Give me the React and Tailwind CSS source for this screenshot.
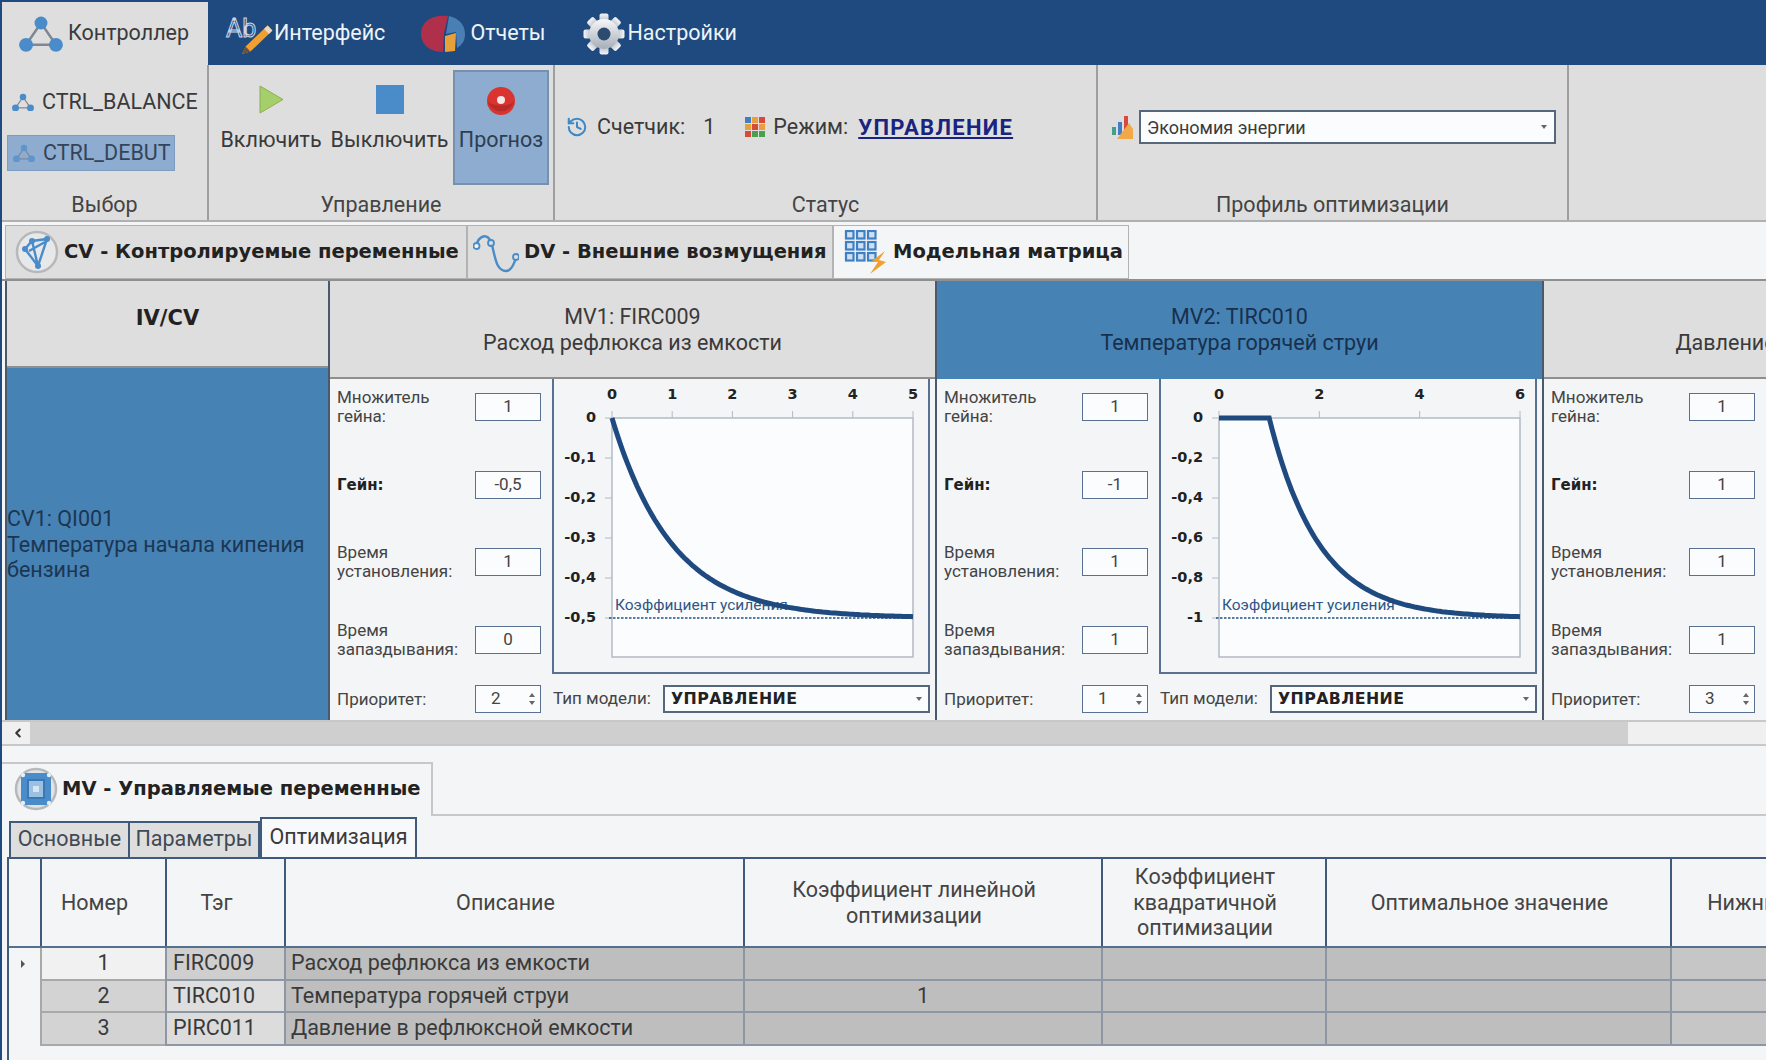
import React from 'react'
import { History, ChevronLeft } from 'lucide-react'

const boldFont = "font-['DejaVu_Sans',sans-serif] font-bold"

const ControllerIcon = ({ size = 44, color = '#4a8bc9' }) => (
  <svg width={size} height={size * 0.86} viewBox="0 0 44 38">
    <path d="M22 8 L7 30 L37 30 Z" fill="none" stroke="#7d8894" strokeWidth="2.5" />
    <circle cx="22" cy="8" r="6.5" fill={color} />
    <circle cx="7" cy="30" r="7" fill={color} />
    <circle cx="37" cy="30" r="7" fill={color} />
  </svg>
)

const AbIcon = () => (
  <svg width="48" height="42" viewBox="0 0 48 42">
    <text x="1" y="24" fontFamily="Roboto, sans-serif" fontSize="25" fill="#24528a" stroke="#c9d6e8" strokeWidth="1">Ab</text>
    <path d="M42.6 12.4 L47.4 17.6 L25.4 38.6 L17 41 L20.6 33.4 Z" fill="#f0a030" />
    <path d="M42.6 12.4 L47.4 17.6 L44 21 L39 16 Z" fill="#e8d8c4" />
    <path d="M20.6 33.4 L25.4 38.6 L17 41 Z" fill="#6a5040" />
  </svg>
)

const PieIcon = () => (
  <svg width="44" height="38" viewBox="0 0 44 38">
    <path d="M27 1 C12 -1 0 6 0 19 C0 30 10 37 22 37 L23 18 Z" fill="#b02f4a" />
    <path d="M28 1 C37 3 44 9 44 19 C44 26 41 30 36 33 L35 17 L25 19 Z" fill="#4a7fb5" />
    <path d="M24 21 L35 18 L34 36 L24 37 Z" fill="#e8a03a" />
  </svg>
)

const GearIcon = () => (
  <svg width="42" height="42" viewBox="0 0 42 42">
    <defs>
      <linearGradient id="gear" x1="0" y1="0" x2="0" y2="1">
        <stop offset="0" stopColor="#f6f7f9" />
        <stop offset="1" stopColor="#a6aeb8" />
      </linearGradient>
    </defs>
    {[0, 45, 90, 135, 180, 225, 270, 315].map((a) => (
      <rect key={a} x="16.5" y="0.5" width="9" height="10" rx="2" fill="url(#gear)" transform={`rotate(${a} 21 21)`} />
    ))}
    <circle cx="21" cy="21" r="15" fill="url(#gear)" />
    <circle cx="21" cy="21" r="6.5" fill="#2d4a70" />
  </svg>
)

const PlayIcon = () => (
  <svg width="25" height="29" viewBox="0 0 25 29">
    <path d="M1 1 L24 14.5 L1 28 Z" fill="#a4cf6a" stroke="#8cb050" strokeWidth="1" />
  </svg>
)

const RecordIcon = () => (
  <svg width="30" height="30" viewBox="0 0 30 30">
    <circle cx="15" cy="15" r="14" fill="#d9342f" />
    <path d="M1.5 15 A14 14 0 0 0 28.5 15 A14 6 0 0 1 1.5 15" fill="#b92a2a" />
    <circle cx="15" cy="14" r="4" fill="#f7e6e6" />
  </svg>
)

const ColorGrid = () => {
  const colors = ['#3f7fc4', '#e8a03a', '#d94a3d', '#e8a03a', '#d94a3d', '#e8a03a', '#d94a3d', '#4aa04f', '#4aa04f']
  return (
    <svg width="20" height="20" viewBox="0 0 20 20">
      {colors.map((c, i) => (
        <rect key={i} x={(i % 3) * 7} y={Math.floor(i / 3) * 7} width="6" height="6" fill={c} />
      ))}
    </svg>
  )
}

const ProfileIcon = () => (
  <svg width="23" height="24" viewBox="0 0 23 24">
    <rect x="1" y="12" width="4" height="8" fill="#4a9d8a" />
    <rect x="7" y="7" width="4" height="13" fill="#3f7fc4" />
    <rect x="13" y="1" width="4" height="14" fill="#d94a3d" />
    <path d="M22 24 L6 24 L18 8 L22 14 Z" fill="#f0a848" />
  </svg>
)

const CvIcon = () => (
  <svg width="44" height="44" viewBox="0 0 44 44">
    <circle cx="22" cy="22" r="20" fill="#e6e8ea" stroke="#b8b8b8" strokeWidth="2.5" />
    <path d="M10 19 L17 11 L32 9 L23 36 Z M17 11 L23 36 M14 21 L30 12" fill="none" stroke="#4a8bc9" strokeWidth="2.4" />
    <circle cx="10" cy="19" r="3" fill="#4a8bc9" />
    <circle cx="17" cy="11" r="3" fill="#4a8bc9" />
    <circle cx="32" cy="9" r="3" fill="#4a8bc9" />
    <circle cx="23" cy="36" r="3" fill="#4a8bc9" />
  </svg>
)

const DvIcon = () => (
  <svg width="46" height="46" viewBox="0 0 46 46">
    <path d="M3 17 C6 6 14 4 18 13 C22 24 22 42 33 42 C40 42 41 32 43 30" fill="none" stroke="#4a8bc9" strokeWidth="2.4" />
    <circle cx="3.5" cy="17" r="3" fill="#f3f5f7" stroke="#4a8bc9" strokeWidth="1.8" />
    <circle cx="18" cy="14" r="3" fill="#dedede" stroke="#4a8bc9" strokeWidth="1.8" />
    <circle cx="43" cy="28" r="3" fill="#dedede" stroke="#4a8bc9" strokeWidth="1.8" />
  </svg>
)

const MatrixIcon = () => (
  <svg width="44" height="44" viewBox="0 0 44 44">
    {[0, 1, 2].flatMap((r) =>
      [0, 1, 2].map((c) => (
        <rect key={`${r}${c}`} x={c * 11 + 2} y={r * 11 + 1} width="7.5" height="7.5" fill="#cfe0f2" stroke="#3f7fc4" strokeWidth="2.2" />
      ))
    )}
    <path d="M41 21 L28 31 L34 32 L26 44 L42 32 L35 30 Z" fill="#f0a030" />
  </svg>
)

const MvIcon = () => (
  <svg width="44" height="44" viewBox="0 0 44 44">
    <circle cx="22" cy="22" r="20" fill="#dfe4ea" stroke="#b8b8b8" strokeWidth="2.5" />
    <rect x="7" y="6" width="30" height="32" rx="2" fill="#4a8bc9" />
    <rect x="14" y="13" width="16" height="18" fill="#9cc0e2" stroke="#3a78b5" strokeWidth="2" />
    <rect x="19" y="19" width="6" height="6" fill="#d9e6f2" />
    {[[9, 8], [35, 8], [9, 36], [35, 36]].map(([x, y]) => (
      <circle key={`${x}${y}`} cx={x} cy={y} r="2.2" fill="#e6eef6" />
    ))}
  </svg>
)

const Chart = ({ xmax, delay, xticks, yticks }) => {
  const left = 58
  const right = 359
  const top = 39
  const gainY = 239
  const sx = (t) => left + (t / xmax) * (right - left)
  const points = []
  for (let i = 0; i <= 120; i++) {
    const t = (i / 120) * xmax
    const v = t < delay ? 0 : 1 - Math.exp(-(t - delay))
    points.push(`${sx(t).toFixed(1)},${(top + v * (gainY - top)).toFixed(1)}`)
  }
  return (
    <svg width="375" height="293" viewBox="0 0 375 293" className="block">
      <rect x={left} y={top} width={right - left} height="239" fill="#fbfcfd" stroke="#b3bac3" strokeWidth="1.5" />
      {xticks.map((t) => (
        <g key={t}>
          <line x1={sx(t)} x2={sx(t)} y1={top - 7} y2={top} stroke="#b3bac3" />
          <text x={sx(t)} y="20" textAnchor="middle" fontFamily="DejaVu Sans, sans-serif" fontWeight="700" fontSize="14.5" fill="#222">{t}</text>
        </g>
      ))}
      {yticks.map((l, i) => {
        const y = top + i * 40
        return (
          <g key={l}>
            <line x1={left - 7} x2={left} y1={y} y2={y} stroke="#b3bac3" />
            <text x="42" y={y + 4} textAnchor="end" fontFamily="DejaVu Sans, sans-serif" fontWeight="700" fontSize="14.5" fill="#222">{l}</text>
          </g>
        )
      })}
      <line x1={left - 3} x2={right} y1={gainY} y2={gainY} stroke="#24507f" strokeWidth="1.5" strokeDasharray="2.5 1.5" />
      <text x={left + 3} y="231" fontFamily="Roboto, sans-serif" fontSize="15.5" fill="#2f5685">Коэффициент усиления</text>
      <polyline points={points.join(' ')} fill="none" stroke="#1f4a7f" strokeWidth="5" />
    </svg>
  )
}

const Field = ({ label, value, bold, spin }) => (
  <div className="flex h-[28px] items-center">
    <div className={`w-[138px] shrink-0 leading-[19px] ${bold ? "pt-[1px] font-['DejaVu_Sans',sans-serif] text-[15px] font-bold text-[#222]" : 'text-[17px] text-[#444]'}`}>{label}</div>
    {spin ? (
      <div className="flex h-[28px] w-[66px] items-center justify-between border border-[#5a7090] bg-[#fbfcfd] pl-[15px] pr-[5px] text-[17px] text-[#444]">
        <span>{value}</span>
        <span className="flex flex-col gap-[4px] text-[#555]">
          <span className="h-0 w-0 border-x-[3px] border-b-[4px] border-x-transparent border-b-[#666]" />
          <span className="h-0 w-0 border-x-[3px] border-t-[4px] border-x-transparent border-t-[#666]" />
        </span>
      </div>
    ) : (
      <div className="flex h-[28px] w-[66px] items-center justify-center border border-[#5a7090] bg-[#fbfcfd] text-[17px] text-[#444]">{value}</div>
    )}
  </div>
)

const MvColumn = ({ title, desc, active, vals, chart }) => (
  <div className="flex w-[607px] shrink-0 flex-col border-r-2 border-[#4b5a6a]">
    <div className={`flex h-[98px] flex-col items-center justify-center border-b-2 pt-[2px] text-[21.5px] leading-[26px] ${active ? 'border-[#4682b4] bg-[#4682b4] text-[#17304d]' : 'border-[#8f8f8f] bg-[#dedede] text-[#3a3a3a]'}`}>
      <div>{title}</div>
      <div>{desc}</div>
    </div>
    <div className="flex flex-col">
      <div className="flex">
        <div className="flex h-[293px] w-[222px] shrink-0 flex-col gap-[49.5px] pl-[7px] pt-[14px]">
          <Field label={<>Множитель<br />гейна:</>} value={vals[0]} />
          <Field label="Гейн:" value={vals[1]} bold />
          <Field label={<>Время<br />установления:</>} value={vals[2]} />
          <Field label={<>Время<br />запаздывания:</>} value={vals[3]} />
        </div>
        <div className="h-[295px] w-[378px] shrink-0 border-x-2 border-b-2 border-[#5a7090]">
          <Chart {...chart} />
        </div>
      </div>
      <div className="mt-[11px] flex h-[28px] items-center">
        <div className="w-[222px] shrink-0 pl-[7px]">
          <Field label="Приоритет:" value={vals[4]} spin />
        </div>
        <div className="w-[111px] shrink-0 pl-[1px] text-[17px] text-[#444]">Тип модели:</div>
        <div className={`flex h-[28px] w-[267px] items-center justify-between border-2 border-[#56667c] bg-[#fbfcfd] pl-[6px] pr-[6px] text-[15.8px] tracking-[0.4px] text-[#222] ${boldFont}`}>
          УПРАВЛЕНИЕ
          <span className="h-0 w-0 border-x-[3.5px] border-t-[4px] border-x-transparent border-t-[#666]" />
        </div>
      </div>
    </div>
  </div>
)

const RibbonGroup = ({ label, className, children }) => (
  <div className={`flex shrink-0 flex-col border-r-2 border-[#9e9e9e] ${className}`}>
    <div className="flex h-[120px]">{children}</div>
    <div className="flex h-[35px] items-center justify-center pt-[6px] text-[21.5px] text-[#444]">{label}</div>
  </div>
)

const columns = ['w-[31px]', 'w-[125px]', 'w-[119px]', 'w-[459px]', 'w-[358px]', 'w-[224px]', 'w-[345px]', 'w-[250px]']

const headers = ['', 'Номер', 'Тэг', 'Описание', <>Коэффициент линейной<br />оптимизации</>, <>Коэффициент<br />квадратичной<br />оптимизации</>, 'Оптимальное значение', 'Нижний предел']

const rows = [
  { num: 1, tag: 'FIRC009', desc: 'Расход рефлюкса из емкости', coef: '', numBg: 'bg-[#f1f1f1]', tagBg: 'bg-[#cfcfcf]' },
  { num: 2, tag: 'TIRC010', desc: 'Температура горячей струи', coef: '1', numBg: 'bg-[#d3d3d3]', tagBg: 'bg-[#dedede]' },
  { num: 3, tag: 'PIRC011', desc: 'Давление в рефлюксной емкости', coef: '', numBg: 'bg-[#d3d3d3]', tagBg: 'bg-[#dcdcdc]' },
]

export default function App() {
  return (
    <div className="flex h-[1060px] w-[1766px] flex-col overflow-hidden border-l-2 border-[#1e4a7f] bg-[#f3f5f7] font-['Roboto',sans-serif] text-[21.5px] text-[#3a3a3a]">
      {/* top menu */}
      <div className="flex h-[65px] shrink-0 items-center bg-[#1e4a7f] text-[#eef3f8]">
        <div className="flex h-full w-[206px] items-center gap-[5px] border-t-2 border-[#1e4a7f] bg-[#dedede] pl-[17px] text-[#3a3a3a]">
          <ControllerIcon />
          <span>Контроллер</span>
        </div>
        <div className="ml-[17px] mt-[2px] flex items-center gap-[1px]">
          <AbIcon />
          <span>Интерфейс</span>
        </div>
        <div className="ml-[36px] mt-[2px] flex items-center gap-[5px]">
          <PieIcon />
          <span>Отчеты</span>
        </div>
        <div className="ml-[37px] mt-[2px] flex items-center gap-[3px]">
          <GearIcon />
          <span>Настройки</span>
        </div>
      </div>

      {/* ribbon */}
      <div className="flex h-[157px] shrink-0 border-b-2 border-[#b0b0b0] bg-[#dedede]">
        <RibbonGroup label="Выбор" className="w-[207px]">
          <div className="flex flex-col pl-[5px] pt-[18px]">
            <div className="flex h-[38px] items-center gap-[8px] pl-[5px]">
              <ControllerIcon size={22} />
              <span>CTRL_BALANCE</span>
            </div>
            <div className="mt-[14px] flex h-[36px] w-[168px] items-center gap-[8px] border border-[#7d9cc0] bg-[#8dacd0] pl-[5px] text-[#33445a]">
              <ControllerIcon size={22} color="#5f94cc" />
              <span>CTRL_DEBUT</span>
            </div>
          </div>
        </RibbonGroup>
        <RibbonGroup label="Управление" className="w-[346px]">
          <div className="flex w-[116px] flex-col items-center pl-[8px] pt-[20px]">
            <PlayIcon />
            <span className="mt-[10px]">Включить</span>
          </div>
          <div className="ml-[6px] flex w-[117px] flex-col items-center pt-[20px]">
            <div className="h-[29px] w-[28px] bg-[#4a8bc9]" />
            <span className="mt-[10px]">Выключить</span>
          </div>
          <div className="ml-[5px] mt-[5px] flex h-[115px] w-[96px] flex-col items-center border-2 border-[#7690ae] bg-[#8dacd0] pt-[14px] text-[#2e3e52]">
            <RecordIcon />
            <span className="mt-[8px]">Прогноз</span>
          </div>
        </RibbonGroup>
        <RibbonGroup label="Статус" className="w-[543px]">
          <div className="flex h-[120px] items-center pl-[11px] pt-[4px]">
            <History size={22} color="#3f88c5" strokeWidth={2.2} />
            <span className="ml-[9px]">Счетчик:</span>
            <span className="ml-[18px]">1</span>
            <div className="ml-[30px]">
              <ColorGrid />
            </div>
            <span className="ml-[8px]">Режим:</span>
            <span className="ml-[10px] text-[22px] font-bold tracking-[1.3px] text-[#1a237e] underline decoration-2 underline-offset-2">УПРАВЛЕНИЕ</span>
          </div>
        </RibbonGroup>
        <RibbonGroup label="Профиль оптимизации" className="w-[471px]">
          <div className="flex h-[120px] items-center gap-[5px] pl-[13px] pt-[4px]">
            <ProfileIcon />
            <div className="flex h-[34px] w-[417px] items-center justify-between border-2 border-[#56667c] bg-[#fbfcfd] pl-[6px] pr-[7px] text-[18px]">
              Экономия энергии
              <span className="h-0 w-0 border-x-[3.5px] border-t-[4px] border-x-transparent border-t-[#666]" />
            </div>
          </div>
        </RibbonGroup>
      </div>

      {/* CV / DV / matrix tabs */}
      <div className="mt-[3px] flex h-[56px] shrink-0 items-stretch border-b-2 border-[#8f8f8f] pl-[3px] text-[#222]">
        <div className={`flex w-[462px] items-center gap-[5px] border border-[#b3b3b3] bg-[#dedede] pl-[9px] text-[19.5px] ${boldFont}`}>
          <CvIcon />
          <span>CV - Контролируемые переменные</span>
        </div>
        <div className={`flex w-[366px] items-center gap-[5px] border border-[#b3b3b3] bg-[#dedede] pl-[5px] text-[19.5px] ${boldFont}`}>
          <DvIcon />
          <span>DV - Внешние возмущения</span>
        </div>
        <div className={`flex w-[296px] items-center gap-[5px] border border-[#b3b3b3] bg-[#f3f5f7] pl-[10px] text-[19.5px] ${boldFont}`}>
          <MatrixIcon />
          <span>Модельная матрица</span>
        </div>
      </div>

      {/* model matrix */}
      <div className="flex h-[439px] shrink-0 overflow-hidden pl-[3px]">
        <div className="flex w-[325px] shrink-0 flex-col border-x-2 border-[#4b5a6a]">
          <div className={`flex h-[87px] items-start justify-center border-b-2 border-[#8f8f8f] bg-[#dedede] pt-[22px] text-[21px] text-[#222] ${boldFont}`}>IV/CV</div>
          <div className="flex flex-1 flex-col justify-center bg-[#4682b4] pt-[1px] leading-[25.5px] text-[#1c3652]">
            <div>CV1: QI001</div>
            <div>Температура начала кипения</div>
            <div>бензина</div>
          </div>
        </div>
        <MvColumn
          title="MV1: FIRC009"
          desc="Расход рефлюкса из емкости"
          vals={['1', '-0,5', '1', '0', '2']}
          chart={{ xmax: 5, delay: 0, xticks: [0, 1, 2, 3, 4, 5], yticks: ['0', '-0,1', '-0,2', '-0,3', '-0,4', '-0,5'] }}
        />
        <MvColumn
          title="MV2: TIRC010"
          desc="Температура горячей струи"
          active
          vals={['1', '-1', '1', '1', '1']}
          chart={{ xmax: 6, delay: 1, xticks: [0, 2, 4, 6], yticks: ['0', '-0,2', '-0,4', '-0,6', '-0,8', '-1'] }}
        />
        <MvColumn
          title="MV3: PIRC011"
          desc="Давление в рефлюксной емкости"
          vals={['1', '1', '1', '1', '3']}
          chart={{ xmax: 5, delay: 0, xticks: [0, 1, 2, 3, 4, 5], yticks: ['0', '0,2', '0,4', '0,6', '0,8', '1'] }}
        />
      </div>

      {/* scrollbar */}
      <div className="flex h-[26px] shrink-0 border-y-2 border-[#c8c8c8] bg-[#f0f0f0] pl-[3px]">
        <div className="flex w-[25px] items-center justify-center text-[#333]">
          <ChevronLeft size={14} strokeWidth={3.5} />
        </div>
        <div className="w-[1598px] bg-[#cfcfcf]" />
      </div>

      {/* MV block */}
      <div className="mt-[16px] flex h-[54px] shrink-0">
        <div className={`flex w-[431px] items-center gap-[4px] border-r-2 border-t-2 border-[#c8c8c8] pb-[2px] pl-[12px] text-[19.5px] text-[#222] ${boldFont}`}>
          <MvIcon />
          <span>MV - Управляемые переменные</span>
        </div>
        <div className="flex-1 border-b-2 border-[#c8c8c8]" />
      </div>

      <div className="mt-[1px] flex h-[40px] shrink-0 items-end pl-[7px]">
        <div className="flex h-[36px] w-[121px] items-center justify-center border-2 border-b-0 border-[#3f5a7a] bg-[#dedede] pb-[1px] text-[#3f4a55]">Основные</div>
        <div className="flex h-[36px] w-[130px] items-center justify-center border-y-2 border-r-2 border-b-0 border-[#3f5a7a] bg-[#dedede] pb-[1px] text-[#3f4a55]">Параметры</div>
        <div className="flex h-[40px] w-[157px] items-center justify-center border-x-2 border-t-2 border-[#3f5a7a] bg-[#f8f9fb] pb-[2px]">Оптимизация</div>
      </div>

      <div className="ml-[5px] flex flex-1 flex-col border-l-2 border-t-2 border-[#3f5a7a]">
        <div className="flex h-[89px] shrink-0 border-b-2 border-[#56708f]">
          {headers.map((h, i) => (
            <div key={i} className={`flex shrink-0 items-center justify-center text-center leading-[25.5px] text-[#444] ${columns[i]} ${i > 0 ? 'border-l-2 border-[#3f5a7a] pr-[18px]' : ''}`}>
              {h}
            </div>
          ))}
        </div>
        {rows.map((r, i) => (
          <div key={r.num} className="flex h-[32.6px] shrink-0">
            <div className="flex w-[31px] shrink-0 items-center pl-[12px]">
              {i === 0 && <span className="h-0 w-0 border-y-[4px] border-l-[4px] border-y-transparent border-l-[#555]" />}
            </div>
            <div className={`flex w-[125px] shrink-0 items-center justify-center border-b-2 border-l-2 border-[#a8a8a8] ${r.numBg}`}>{r.num}</div>
            <div className={`flex w-[119px] shrink-0 items-center border-b-2 border-l-2 border-[#8d97a3] pl-[6px] ${r.tagBg}`}>{r.tag}</div>
            <div className="flex w-[459px] shrink-0 items-center border-b-2 border-l-2 border-[#8d97a3] bg-[#bebebe] pl-[5px]">{r.desc}</div>
            <div className="flex w-[358px] shrink-0 items-center justify-center border-b-2 border-l-2 border-[#8d97a3] bg-[#bebebe]">{r.coef}</div>
            <div className="w-[224px] shrink-0 border-b-2 border-l-2 border-[#8d97a3] bg-[#bebebe]" />
            <div className="w-[345px] shrink-0 border-b-2 border-l-2 border-[#8d97a3] bg-[#bebebe]" />
            <div className="w-[250px] shrink-0 border-b-2 border-l-2 border-[#8d97a3] bg-[#c6c6c6]" />
          </div>
        ))}
      </div>
    </div>
  )
}
